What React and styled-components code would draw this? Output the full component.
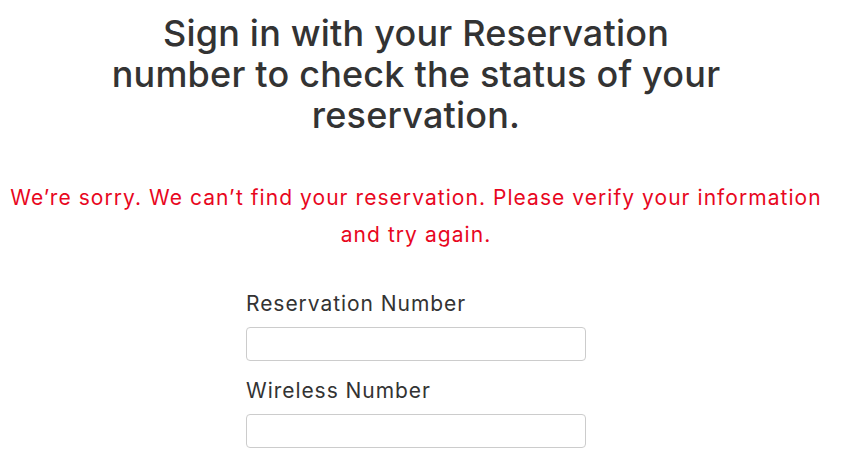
import React from "react";
import styled, { createGlobalStyle } from "styled-components";

const GlobalStyle = createGlobalStyle`
  html, body {
    margin: 0;
    padding: 0;
    background: #ffffff;
  }
  body {
    font-family: Inter, "Noto Sans", "Liberation Sans", sans-serif;
    color: #333333;
  }
`;

const Page = styled.main`
  width: 832px;
  display: flex;
  flex-direction: column;
  align-items: center;
  padding-top: 13px;
`;

const Heading = styled.h1`
  margin: 0;
  max-width: 620px;
  font-size: 36px;
  line-height: 41px;
  font-weight: 450;
  text-align: center;
  letter-spacing: 0.2px;
  color: #333333;
`;

const ErrorText = styled.p`
  margin: 43px 0 0;
  font-size: 21px;
  line-height: 37px;
  letter-spacing: 1.05px;
  text-align: center;
  color: #e8071e;
  white-space: nowrap;
`;

const Form = styled.form`
  width: 340px;
  margin-top: 38px;
  display: flex;
  flex-direction: column;
`;

const Field = styled.div`
  display: flex;
  flex-direction: column;
  gap: 10px;
  & + & {
    margin-top: 17px;
  }
`;

const Label = styled.label`
  font-size: 21px;
  line-height: 26px;
  letter-spacing: 0.95px;
  color: #333333;
`;

const Input = styled.input`
  box-sizing: border-box;
  width: 100%;
  height: 34px;
  border: 1px solid #cccccc;
  border-radius: 4px;
  background: #ffffff;
  padding: 0 10px;
  font-size: 16px;
  outline: none;
`;

export default function App() {
  return (
    <>
      <GlobalStyle />
      <Page>
        <Heading>
          Sign in with your Reservation number to check the status of your
          reservation.
        </Heading>
        <ErrorText>
          We’re sorry. We can’t find your reservation. Please verify your
          information
          <br />
          and try again.
        </ErrorText>
        <Form>
          <Field>
            <Label htmlFor="res">Reservation Number</Label>
            <Input id="res" type="text" />
          </Field>
          <Field>
            <Label htmlFor="wireless">Wireless Number</Label>
            <Input id="wireless" type="text" />
          </Field>
        </Form>
      </Page>
    </>
  );
}
